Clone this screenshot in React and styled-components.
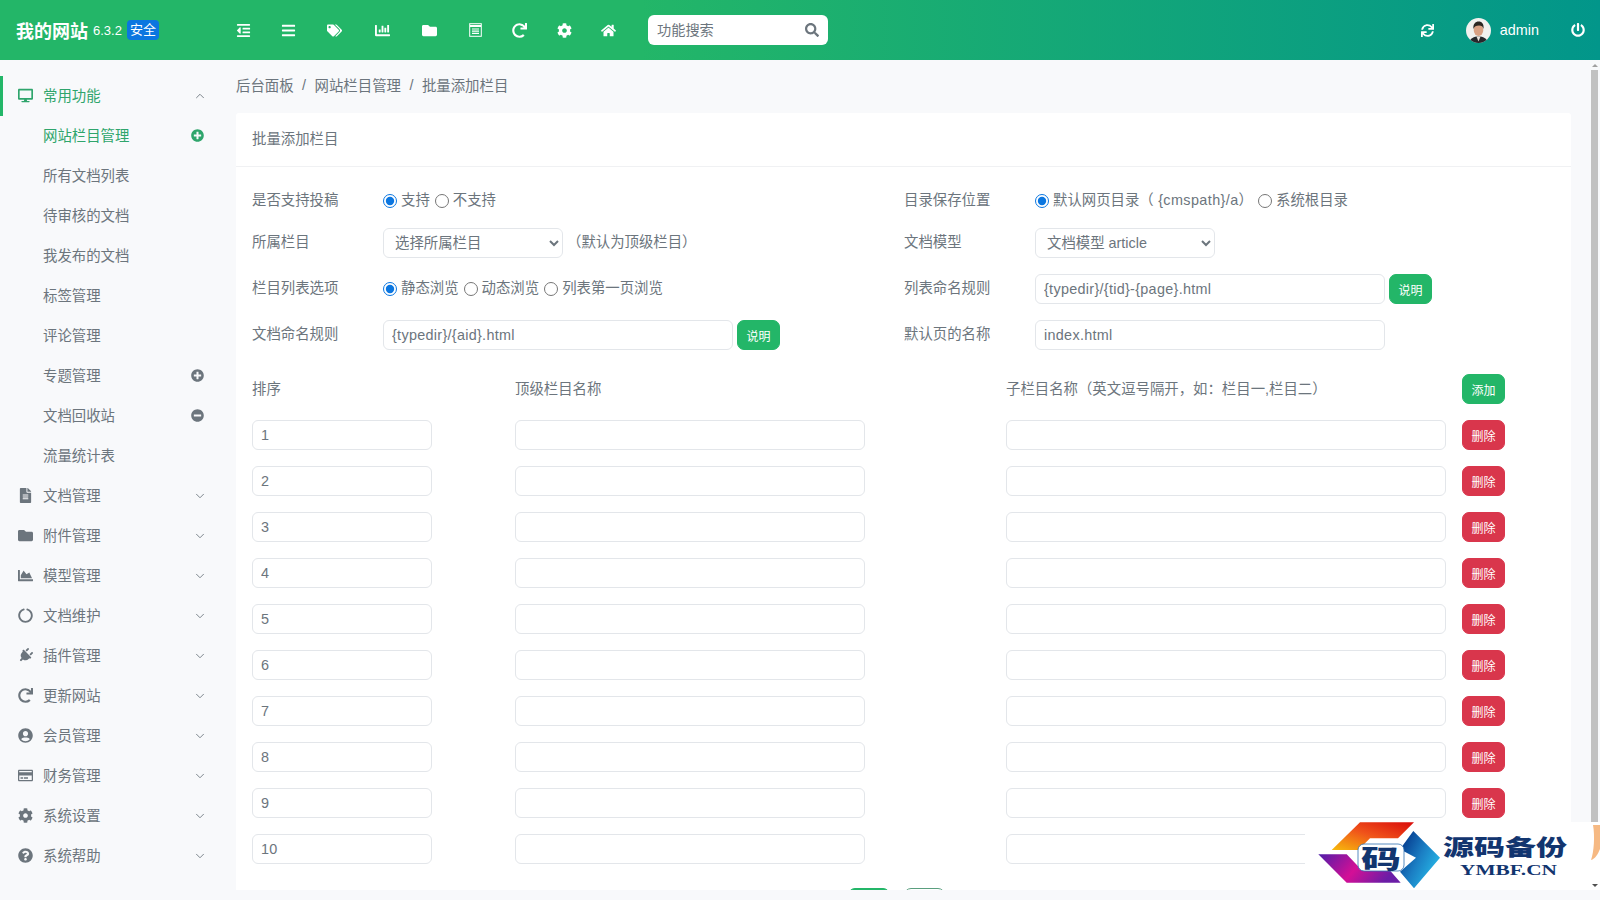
import React from 'react';
import styled, { createGlobalStyle } from 'styled-components';
import {
  FaOutdent, FaBars, FaTags, FaChartBar, FaFolder, FaRedo, FaCog, FaHome, FaSearch, FaSync, FaPowerOff,
  FaDesktop, FaPlusCircle, FaMinusCircle, FaFileAlt, FaChartArea, FaCircleNotch, FaPlug, FaUserCircle,
  FaRegCreditCard, FaQuestionCircle,
} from 'react-icons/fa';
import { ChevronDown, ChevronUp } from 'lucide-react';

const GREEN = '#23b668';
const GREY = '#6c757d';
const FONT = '"Liberation Sans", "Noto Sans CJK SC", sans-serif';

const GlobalStyle = createGlobalStyle`
  * { box-sizing: border-box; }
  html, body { margin: 0; height: 100%; overflow: hidden; }
  body { font-family: ${FONT}; font-size: 14.4px; color: ${GREY}; background: #f8f9fb; }
`;

const Page = styled.div`
  width: 1600px;
  height: 900px;
  display: flex;
  flex-direction: column;
  position: relative;
`;

const Header = styled.header`
  height: 60px;
  flex: none;
  display: flex;
  align-items: center;
  color: #fff;
  background: linear-gradient(90deg, ${GREEN} 40%, #02968a 100%);
`;

const Brand = styled.div`
  width: 221px;
  padding-left: 16px;
  display: flex;
  align-items: center;
`;

const BrandName = styled.span`
  font-size: 18px;
  font-weight: 700;
`;

const Version = styled.span`
  font-size: 13px;
  margin-left: 5px;
`;

const SafeBadge = styled.span`
  font-size: 13px;
  line-height: 20px;
  padding: 0 3px;
  margin-left: 5px;
  border-radius: 4px;
  background: #0b76e0;
`;

const NavIcon = styled.a`
  width: ${(p) => p.$w}px;
  height: 30px;
  display: flex;
  align-items: center;
  justify-content: center;
  font-size: 15px;
  color: #fff;
`;

const Search = styled.div`
  width: 180px;
  height: 30px;
  margin-left: 17px;
  padding: 0 9px;
  display: flex;
  align-items: center;
  border-radius: 6px;
  background: #fff;
  color: ${GREY};
`;

const SearchInput = styled.input`
  flex: 1;
  min-width: 0;
  border: 0;
  outline: 0;
  padding: 0;
  font: 14.2px ${FONT};
  &::placeholder { color: ${GREY}; opacity: 1; }
`;

const HeaderRight = styled.div`
  margin-left: auto;
  display: flex;
  align-items: center;
  padding-right: 15px;
`;

const Avatar = styled.svg`
  width: 25px;
  height: 25px;
  margin-left: 32px;
  border-radius: 50%;
  display: block;
`;

const UserName = styled.span`
  margin: 0 32px 0 9px;
  font-size: 14.4px;
`;

const Body = styled.div`
  flex: 1;
  min-height: 0;
  display: flex;
`;

const Sidebar = styled.nav`
  width: 236px;
  flex: none;
  padding-top: 16px;
`;

const MenuRow = styled.div`
  height: 40px;
  display: flex;
  align-items: center;
  padding: 0 ${(p) => (p.$sub ? 32 : 29)}px 0 ${(p) => (p.$sub ? 43 : 18)}px;
  border-left: ${(p) => (p.$bar ? `3px solid ${GREEN}` : '0')};
  color: ${(p) => (p.$active ? '#2fa56c' : GREY)};
  ${(p) => p.$bar && 'padding-left: 15px;'}
`;

const MenuIcon = styled.span`
  width: 25px;
  flex: none;
  display: flex;
  align-items: center;
  padding-bottom: 2px;
  font-size: 15px;
`;

const MenuLabel = styled.span`
  flex: 1;
  padding-bottom: 3px;
`;

const MenuBadge = styled.span`
  display: flex;
  padding-bottom: 2px;
  font-size: 13px;
`;

const PlugIcon = styled(FaPlug)`
  transform: rotate(45deg);
`;

const Main = styled.main`
  flex: 1;
  min-width: 0;
  display: flex;
  flex-direction: column;
  padding-right: 29px;
  padding-bottom: 10px;
`;

const Crumbs = styled.div`
  height: 53px;
  flex: none;
  display: flex;
  align-items: center;
  gap: 8.5px;
  padding-bottom: 4px;
`;

const Card = styled.section`
  flex: 1;
  min-height: 0;
  overflow: hidden;
  background: #fff;
  border-radius: 3px 3px 0 0;
`;

const CardTitle = styled.div`
  height: 54px;
  padding: 0 0 4px 16px;
  display: flex;
  align-items: center;
  border-bottom: 1px solid #f0f1f3;
`;

const CardBody = styled.div`
  padding: 23px 0 0 16px;
`;

const FieldGrid = styled.div`
  display: grid;
  grid-template-columns: 652px 1fr;
  row-gap: 16px;
  margin-bottom: 24px;
`;

const Field = styled.div`
  display: flex;
  align-items: center;
  min-height: 22px;
`;

const Label = styled.span`
  width: 131px;
  flex: none;
  line-height: 19px;
  padding-bottom: 1px;
`;

const RadioLabel = styled.label`
  display: flex;
  align-items: center;
  margin-right: 5px;
`;

const RadioText = styled.span`
  line-height: 19px;
  padding-bottom: 1px;
`;

const Latin = styled.span`
  letter-spacing: 0.4px;
`;

const Radio = styled.input.attrs({ type: 'radio' })`
  width: 14px;
  height: 14px;
  margin: 0 4px 0 0;
  accent-color: #0b76e0;
`;

const Select = styled.select`
  width: 180px;
  height: 30px;
  padding: 0 4px 0 7px;
  border: 1px solid #e3e6ea;
  border-radius: 6px;
  background: #fff;
  color: ${GREY};
  font: 14.4px ${FONT};
`;

const Input = styled.input`
  width: ${(p) => p.$w}px;
  height: 30px;
  padding: 0 8px;
  border: 1px solid #e3e6ea;
  border-radius: 6px;
  outline: 0;
  background: #fff;
  color: ${GREY};
  font: 14.4px ${FONT};
  letter-spacing: 0.3px;
`;

const Button = styled.button`
  width: ${(p) => p.$w || 43}px;
  height: 30px;
  flex: none;
  padding: 0;
  margin-left: ${(p) => p.$ml || 0}px;
  border: 1px solid ${(p) => p.$bg || GREEN};
  border-radius: 7px;
  background: ${(p) => p.$bg || GREEN};
  color: #fff;
  font: 12px ${FONT};
`;

const OutlineButton = styled(Button)`
  background: #fff;
  color: ${GREEN};
  border-color: #5a9f7f;
`;

const TableRow = styled.div`
  display: grid;
  grid-template-columns: 263px 491px 456px 1fr;
  align-items: center;
  height: 30px;
  margin-bottom: 16px;
`;

const ColTitle = styled.span`
  padding-bottom: 3px;
`;

const Actions = styled.div`
  display: flex;
  justify-content: center;
  gap: 14px;
  margin: 24px 30px 0 0;
`;

const ScrollTrack = styled.div`
  position: absolute;
  top: 60px;
  right: 0;
  bottom: 10px;
  width: 11px;
`;

const ScrollThumb = styled.div`
  position: absolute;
  top: 10px;
  left: 2px;
  width: 7px;
  height: 760px;
  background: #c1c1c1;
`;

const ScrollArrow = styled.span`
  position: absolute;
  left: 3px;
  z-index: 3;
  width: 0;
  height: 0;
  border-left: 3px solid transparent;
  border-right: 3px solid transparent;
  ${(p) => (p.$down
    ? 'bottom: 3px; border-top: 3px solid #505050;'
    : 'top: 4px; border-bottom: 3px solid #a0a0a0;')}
`;

const Watermark = styled.svg`
  position: absolute;
  left: 1305px;
  top: 822px;
  width: 295px;
  height: 68px;
  background: #fff;
  display: block;
  z-index: 2;
`;

const topMenu = [
  { w: 45, icon: <FaOutdent /> },
  { w: 45, icon: <FaBars /> },
  { w: 47, icon: <FaTags /> },
  { w: 48, icon: <FaChartBar /> },
  { w: 47, icon: <FaFolder /> },
  {
    w: 44,
    icon: (
      <svg width="13" height="14" viewBox="0 0 13 14" fill="none" stroke="#fff">
        <rect x="0.7" y="0.7" width="11.6" height="12.6" />
        <path d="M1 3h11" strokeWidth="2" />
        <path d="M3 6h7M3 8.2h7M3 10.4h7" strokeWidth="1.2" />
      </svg>
    ),
  },
  { w: 45, icon: <FaRedo /> },
  { w: 44, icon: <FaCog /> },
  { w: 45, icon: <FaHome /> },
];

const subMenu = [
  { name: '网站栏目管理', badge: <FaPlusCircle />, active: true },
  { name: '所有文档列表' },
  { name: '待审核的文档' },
  { name: '我发布的文档' },
  { name: '标签管理' },
  { name: '评论管理' },
  { name: '专题管理', badge: <FaPlusCircle /> },
  { name: '文档回收站', badge: <FaMinusCircle /> },
  { name: '流量统计表' },
];

const groups = [
  { name: '文档管理', icon: <FaFileAlt /> },
  { name: '附件管理', icon: <FaFolder /> },
  { name: '模型管理', icon: <FaChartArea /> },
  { name: '文档维护', icon: <FaCircleNotch /> },
  { name: '插件管理', icon: <PlugIcon /> },
  { name: '更新网站', icon: <FaRedo /> },
  { name: '会员管理', icon: <FaUserCircle /> },
  { name: '财务管理', icon: <FaRegCreditCard /> },
  { name: '系统设置', icon: <FaCog /> },
  { name: '系统帮助', icon: <FaQuestionCircle /> },
];

const rows = [1, 2, 3, 4, 5, 6, 7, 8, 9, 10];

const App = () => (
  <Page>
    <GlobalStyle />
    <Header>
      <Brand>
        <BrandName>我的网站</BrandName>
        <Version>6.3.2</Version>
        <SafeBadge>安全</SafeBadge>
      </Brand>
      {topMenu.map((item, i) => (
        <NavIcon key={i} $w={item.w}>{item.icon}</NavIcon>
      ))}
      <Search>
        <SearchInput placeholder="功能搜索" />
        <FaSearch size={14} />
      </Search>
      <HeaderRight>
        <FaSync size={13} />
        <Avatar viewBox="0 0 25 25">
          <rect width="25" height="25" fill="#f1f1ef" />
          <path d="M3 25c1-5 5-6.500 9.500-6.500S21 20 22 25z" fill="#26272b" />
          <path d="M10.500 18.500h4l-2 5z" fill="#e9e3dc" />
          <ellipse cx="12.500" cy="12" rx="4.800" ry="6" fill="#d9a184" />
          <path d="M7.500 11c-.8-5 2-7.500 5.200-7.500 3.300 0 5.500 2.500 4.800 7.500-.6-2.500-1.800-3.500-4.500-3.500-2.900 0-4.800 1-5.500 3.500z" fill="#2c2622" />
        </Avatar>
        <UserName>admin</UserName>
        <FaPowerOff size={14} />
      </HeaderRight>
    </Header>

    <Body>
      <Sidebar>
        <MenuRow $bar $active>
          <MenuIcon><FaDesktop /></MenuIcon>
          <MenuLabel>常用功能</MenuLabel>
          <ChevronUp size={14} strokeWidth={1.5} color={GREY} />
        </MenuRow>
        {subMenu.map((item) => (
          <MenuRow key={item.name} $sub $active={item.active}>
            <MenuLabel>{item.name}</MenuLabel>
            {item.badge && <MenuBadge>{item.badge}</MenuBadge>}
          </MenuRow>
        ))}
        {groups.map((item) => (
          <MenuRow key={item.name}>
            <MenuIcon>{item.icon}</MenuIcon>
            <MenuLabel>{item.name}</MenuLabel>
            <ChevronDown size={14} strokeWidth={1.5} />
          </MenuRow>
        ))}
      </Sidebar>

      <Main>
        <Crumbs>
          <span>后台面板</span>
          <span>/</span>
          <span>网站栏目管理</span>
          <span>/</span>
          <span>批量添加栏目</span>
        </Crumbs>
        <Card>
          <CardTitle>批量添加栏目</CardTitle>
          <CardBody>
            <FieldGrid>
              <Field>
                <Label>是否支持投稿</Label>
                <RadioLabel><Radio name="issend" defaultChecked /><RadioText>支持</RadioText></RadioLabel>
                <RadioLabel><Radio name="issend" /><RadioText>不支持</RadioText></RadioLabel>
              </Field>
              <Field>
                <Label>目录保存位置</Label>
                <RadioLabel>
                  <Radio name="path" defaultChecked />
                  <RadioText>默认网页目录（<Latin> {'{cmspath}'}/a</Latin>）</RadioText>
                </RadioLabel>
                <RadioLabel><Radio name="path" /><RadioText>系统根目录</RadioText></RadioLabel>
              </Field>
              <Field>
                <Label>所属栏目</Label>
                <Select defaultValue="0"><option value="0">选择所属栏目</option></Select>
                <RadioText>&nbsp;（默认为顶级栏目）</RadioText>
              </Field>
              <Field>
                <Label>文档模型</Label>
                <Select defaultValue="1"><option value="1">文档模型 article</option></Select>
              </Field>
              <Field>
                <Label>栏目列表选项</Label>
                <RadioLabel><Radio name="list" defaultChecked /><RadioText>静态浏览</RadioText></RadioLabel>
                <RadioLabel><Radio name="list" /><RadioText>动态浏览</RadioText></RadioLabel>
                <RadioLabel><Radio name="list" /><RadioText>列表第一页浏览</RadioText></RadioLabel>
              </Field>
              <Field>
                <Label>列表命名规则</Label>
                <Input $w={350} defaultValue="{typedir}/{tid}-{page}.html" />
                <Button $ml={4}>说明</Button>
              </Field>
              <Field>
                <Label>文档命名规则</Label>
                <Input $w={350} defaultValue="{typedir}/{aid}.html" />
                <Button $ml={4}>说明</Button>
              </Field>
              <Field>
                <Label>默认页的名称</Label>
                <Input $w={350} defaultValue="index.html" />
              </Field>
            </FieldGrid>

            <TableRow>
              <ColTitle>排序</ColTitle>
              <ColTitle>顶级栏目名称</ColTitle>
              <ColTitle>子栏目名称（英文逗号隔开，如：栏目一,栏目二）</ColTitle>
              <Button>添加</Button>
            </TableRow>
            {rows.map((n) => (
              <TableRow key={n}>
                <Input $w={180} defaultValue={n} />
                <Input $w={350} />
                <Input $w={440} />
                <Button $bg="#d9364c">删除</Button>
              </TableRow>
            ))}
            <Actions>
              <Button $w={42}>确定</Button>
              <OutlineButton $w={41}>返回</OutlineButton>
            </Actions>
          </CardBody>
        </Card>
      </Main>
    </Body>

    <ScrollTrack>
      <ScrollArrow />
      <ScrollThumb />
    </ScrollTrack>
    <Watermark viewBox="0 0 295 68">
      <defs>
        <linearGradient id="wmTop" x1="0" y1="1" x2="1" y2="0">
          <stop offset="0" stopColor="#f7bb0c" />
          <stop offset="0.5" stopColor="#f0541a" />
          <stop offset="1" stopColor="#d90b0b" />
        </linearGradient>
        <linearGradient id="wmBottom" x1="0" y1="0" x2="1" y2="0.3">
          <stop offset="0" stopColor="#4f1ea9" />
          <stop offset="0.55" stopColor="#d40f96" />
          <stop offset="1" stopColor="#6b1da6" />
        </linearGradient>
        <linearGradient id="wmBlue" x1="0" y1="0" x2="1" y2="0.7">
          <stop offset="0" stopColor="#00287f" />
          <stop offset="0.55" stopColor="#1b7fc4" />
          <stop offset="1" stopColor="#27bdea" />
        </linearGradient>
      </defs>
      <polygon points="26.700,28 55,0.300 109,0.300 93,16.300 65,16.300 53.300,28" fill="url(#wmTop)" />
      <polygon points="13.300,32.300 41.700,32.300 55,46.300 83,46.300 95.700,60.700 41.700,60.700" fill="url(#wmBottom)" />
      <polygon points="95,27.300 108.300,9 135,35.700 109,66.300 95,49.700 111,35.700" fill="url(#wmBlue)" />
      <rect x="53" y="22" width="46" height="27" rx="6" fill="#fff" stroke="#2f6fb0" strokeWidth="0.8" />
      <text x="56" y="46" textLength="40" lengthAdjust="spacingAndGlyphs" fontFamily={FONT} fontWeight="900" fontSize="25" fill="#12356f">码</text>
      <text x="138" y="33" textLength="124" lengthAdjust="spacingAndGlyphs" fontFamily={FONT} fontWeight="900" fontSize="22" fill="#12356f">源码备份</text>
      <text x="155" y="53" textLength="97" lengthAdjust="spacingAndGlyphs" fontFamily='"Liberation Serif", serif' fontWeight="700" fontSize="14" fill="#12356f">YMBF.CN</text>
      <path d="M288 3h7v24c-2 5-5 10-9 11 3-8 4-24 2-35z" fill="#f6b983" />
    </Watermark>
    <ScrollTrack>
      <ScrollArrow $down />
    </ScrollTrack>
  </Page>
);

export default App;
